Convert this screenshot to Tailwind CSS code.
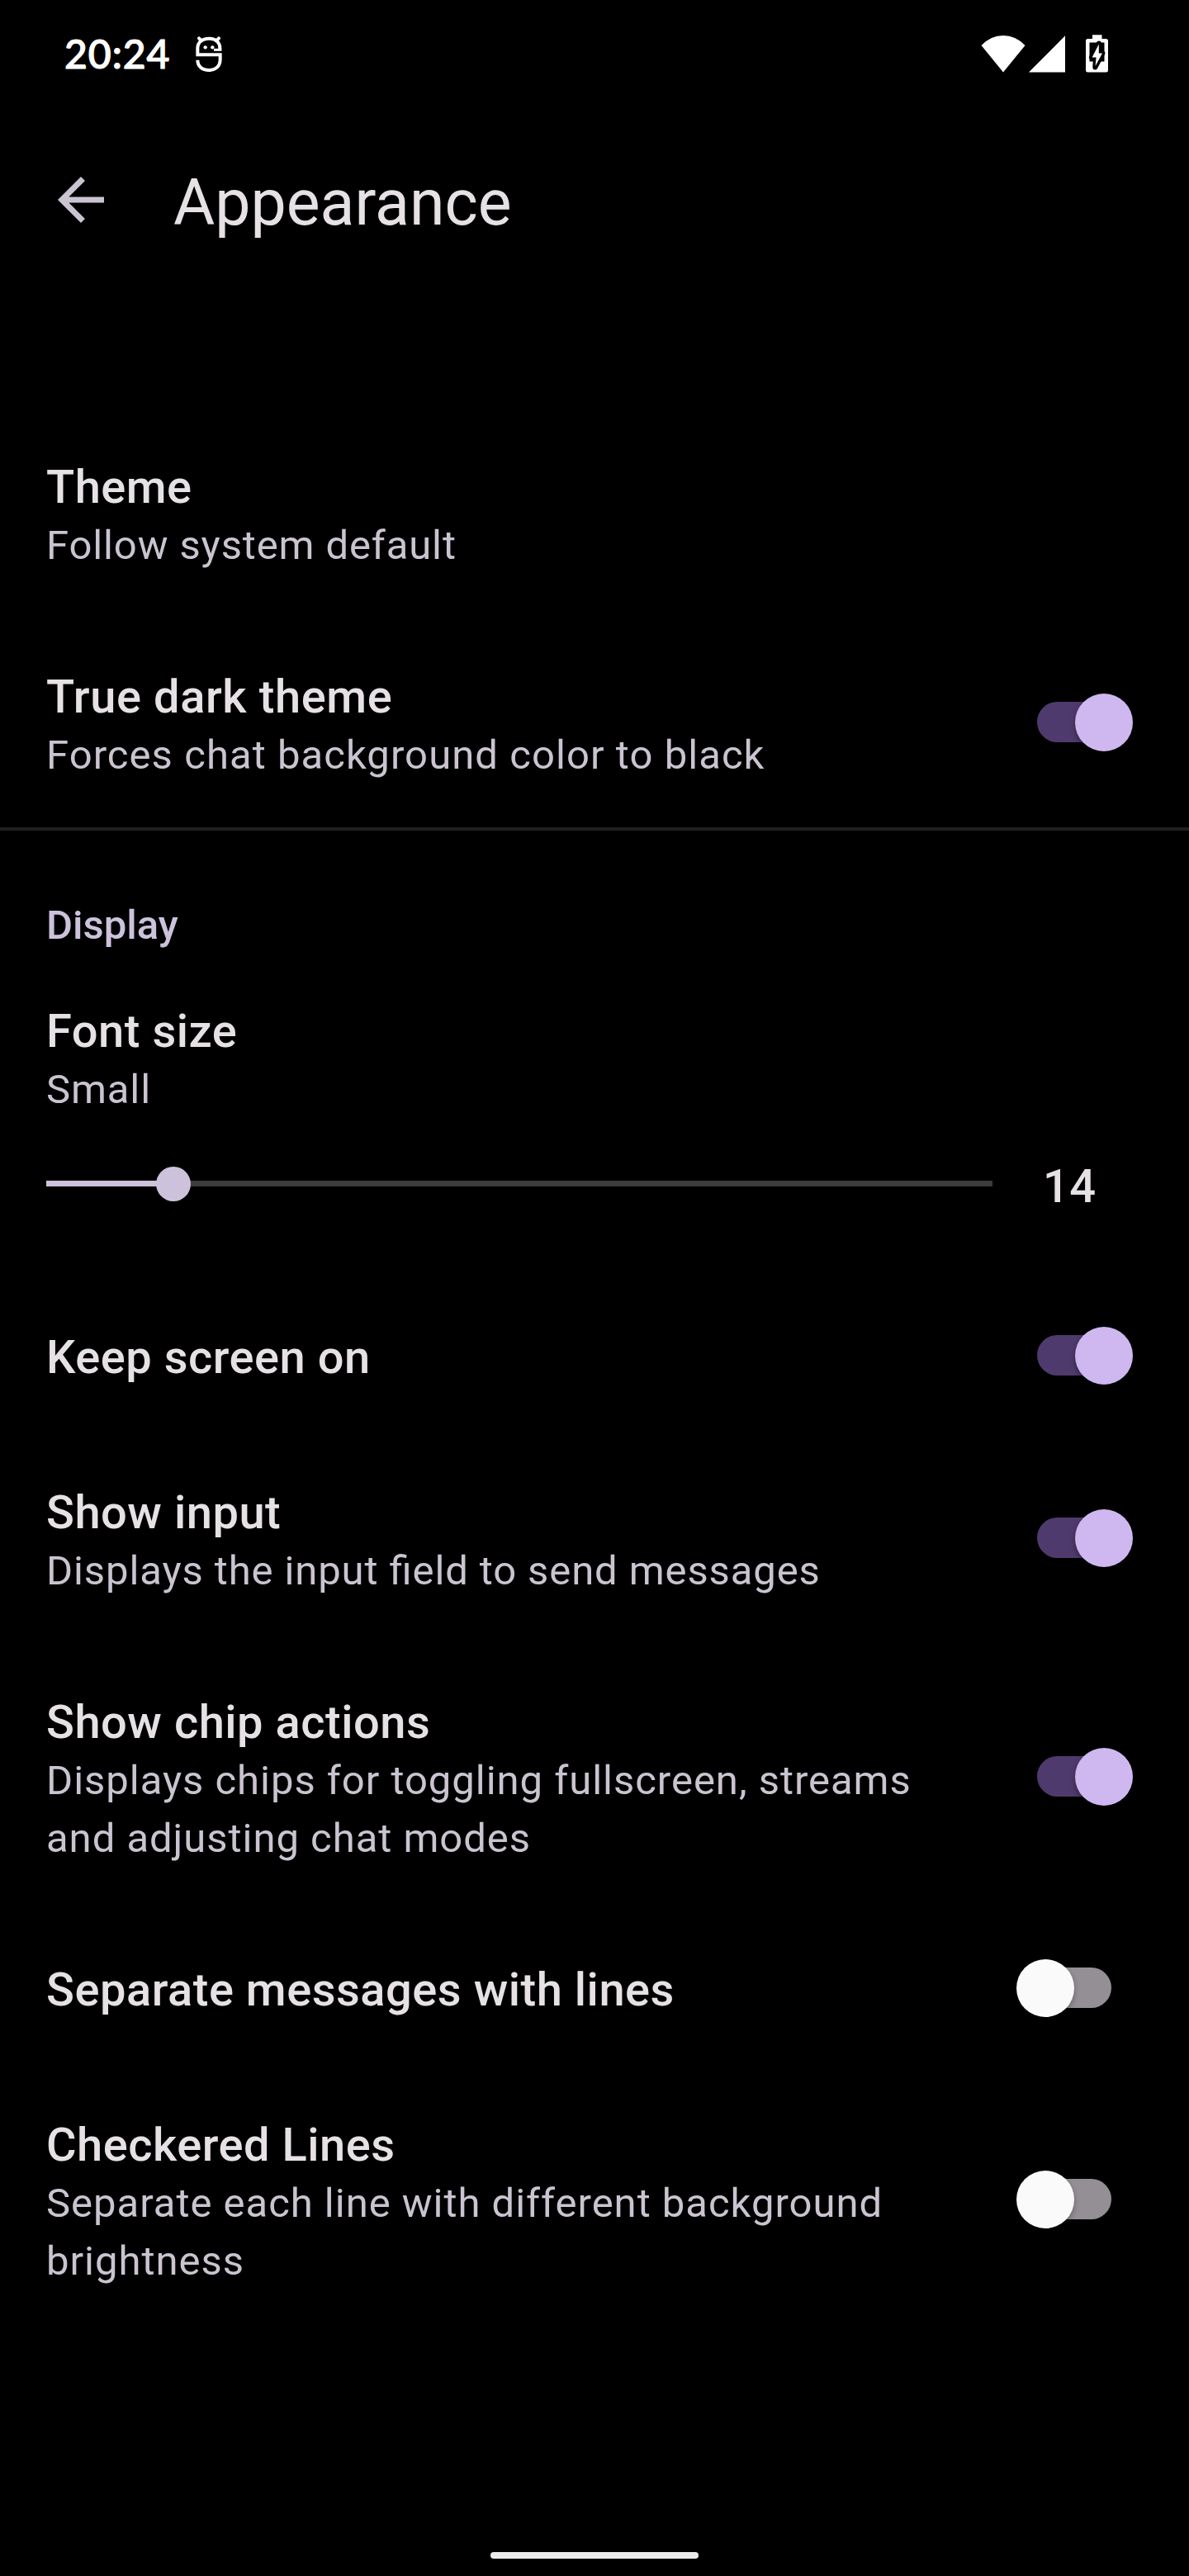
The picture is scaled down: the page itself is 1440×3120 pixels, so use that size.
<!DOCTYPE html>
<html lang="en">
<head>
<meta charset="utf-8">
<meta name="viewport" content="width=device-width, initial-scale=1">
<title>Appearance</title>
<script src="https://cdn.jsdelivr.net/npm/@tailwindcss/browser@4"></script>
</head>
<body class="bg-black">
<div class="w-[1440px] h-[3120px] bg-black flex flex-col overflow-hidden font-[Roboto,sans-serif] text-[#e6e1e5]">

  <!-- Status bar -->
  <header class="h-[140px] shrink-0 flex justify-between pl-[78px] pr-[98px] text-white">
    <div class="flex">
      <span class="mt-[35px] h-[60px] leading-[60px] text-[48px] font-medium tracking-[1px] font-[Lato,sans-serif] [-webkit-text-stroke:1.2px_#fff]">20:24</span>
      <svg class="ml-[29px] mt-[42px] w-[36px] h-[48px]" viewBox="0 0 108 144" fill="none" stroke="#fff" stroke-width="12">
        <path d="M18 13l9 9M90 13l-9 9" stroke-width="12" stroke-linecap="round"/>
        <path d="M94 54V50C94 27 78 14 54 14C30 14 13 27 13 50V73H95V90C95 115 78 129 54 129C30 129 13 115 13 92"/>
        <path d="M72 55H100" stroke-width="9"/>
        <circle cx="41" cy="46" r="6.500" fill="#fff" stroke="none"/>
        <circle cx="67" cy="46" r="6.500" fill="#fff" stroke="none"/>
      </svg>
    </div>
    <div class="flex pt-[42px]">
      <svg class="w-[54px] h-[46px]" viewBox="0 0 54 46" fill="#fff"><path d="M.5 13Q12 1 27 1T53.500 13L27 45.500Z"/></svg>
      <svg class="ml-[4px] w-[44px] h-[46px]" viewBox="0 0 44 46" fill="#fff"><path d="M44 1.300V45.500H0Z"/></svg>
      <svg class="ml-[25px] w-[27px] h-[46px]" viewBox="0 0 27 46">
        <path fill="#fff" d="M8 .3H19.500V5H24.500Q27 5 27 7.500V43Q27 45.500 24.500 45.500H2.500Q0 45.500 0 43V7.500Q0 5 2.500 5H8Z"/>
        <path fill="#000" d="M4.500 9.500H22.500V32.500H4.500Z"/>
        <path fill="#000" stroke="#000" stroke-width="6" stroke-linejoin="round" d="M15.800 10.500L7 27.500H12L11.300 39.500L20.300 22.500H15.800Z"/>
        <path fill="#fff" d="M15.800 11.500L7.600 27.500H12.600L11.600 38L20 22.500H15.800Z"/>
      </svg>
    </div>
  </header>

  <!-- App bar -->
  <div class="h-[354px] shrink-0 flex pl-[56px] pt-[60px]">
    <svg class="w-[84px] h-[84px]" viewBox="0 0 24 24" fill="#cac4d0"><path d="M20 11H7.830l5.590-5.590L12 4l-8 8 8 8 1.410-1.410L7.830 13H20v-2z"/></svg>
    <h1 class="ml-[70px] mt-px h-[90px] leading-[90px] text-[77px]">Appearance</h1>
  </div>

  <main class="flex flex-col [font-feature-settings:'liga'_1]">
    <section class="border-b-4 border-[#1f1f1f]">
      <div class="h-[254px] pt-[62px] pl-[56px]">
        <h2 class="text-[56px] leading-[68px] font-medium tracking-[.525px]">Theme</h2>
        <p class="mt-[2px] text-[49px] leading-[70px] tracking-[.875px] text-[#cac4d0]">Follow system default</p>
      </div>
      <div class="h-[254px] pl-[56px] pr-[68px] flex justify-between">
        <div class="pt-[62px]">
          <h2 class="text-[56px] leading-[68px] font-medium tracking-[.6px]">True dark theme</h2>
          <p class="mt-[2px] text-[49px] leading-[70px] tracking-[1.06px] text-[#cac4d0]">Forces chat background color to black</p>
        </div>
        <div class="relative self-center w-[142px] h-[70px] flex items-center pl-[26px]">
          <div class="mb-px w-[90px] h-[49px] rounded-full bg-[#4f3a6d]"></div>
          <div class="absolute right-0 top-0 size-[70px] rounded-full bg-[#cfb8f0] shadow-[0_3px_6px_rgba(0,0,0,.4)]"></div>
        </div>
      </div>
    </section>

    <section>
      <h3 class="pt-[80px] pl-[56px] text-[49px] leading-[70px] font-medium text-[#ccc2dc]">Display</h3>

      <div class="h-[392px] pt-[59px] pl-[56px]">
        <h2 class="text-[56px] leading-[68px] font-medium tracking-[.525px]">Font size</h2>
        <p class="mt-[2px] text-[49px] leading-[70px] tracking-[.875px] text-[#cac4d0]">Small</p>
        <div class="mt-[48px] flex">
          <div class="relative w-[1146px] h-[61px] flex items-center">
            <div class="w-full h-[7px] bg-[#3d3b3e]"><div class="h-full w-[154px] bg-[#ccc2dc]"></div></div>
            <div class="absolute left-[132.500px] top-[10px] size-[42px] rounded-full bg-[#ccc2dc]"></div>
          </div>
          <span class="ml-[61px] text-[56px] leading-[68px] font-medium tracking-[.525px]">14</span>
        </div>
      </div>

      <div class="h-[188px] pl-[56px] pr-[68px] flex justify-between">
        <h2 class="pt-[62px] text-[56px] leading-[68px] font-medium tracking-[.525px]">Keep screen on</h2>
        <div class="relative self-center w-[142px] h-[70px] flex items-center pl-[26px]">
          <div class="mb-px w-[90px] h-[49px] rounded-full bg-[#4f3a6d]"></div>
          <div class="absolute right-0 top-0 size-[70px] rounded-full bg-[#cfb8f0] shadow-[0_3px_6px_rgba(0,0,0,.4)]"></div>
        </div>
      </div>

      <div class="h-[254px] pl-[56px] pr-[68px] flex justify-between">
        <div class="pt-[62px]">
          <h2 class="text-[56px] leading-[68px] font-medium tracking-[.525px]">Show input</h2>
          <p class="mt-[2px] text-[49px] leading-[70px] tracking-[.89px] text-[#cac4d0]">Displays the input field to send messages</p>
        </div>
        <div class="relative self-center w-[142px] h-[70px] flex items-center pl-[26px]">
          <div class="mb-px w-[90px] h-[49px] rounded-full bg-[#4f3a6d]"></div>
          <div class="absolute right-0 top-0 size-[70px] rounded-full bg-[#cfb8f0] shadow-[0_3px_6px_rgba(0,0,0,.4)]"></div>
        </div>
      </div>

      <div class="h-[324px] pl-[56px] pr-[68px] flex justify-between">
        <div class="pt-[62px]">
          <h2 class="text-[56px] leading-[68px] font-medium tracking-[.525px]">Show chip actions</h2>
          <p class="mt-[2px] text-[49px] leading-[70px] tracking-[.97px] text-[#cac4d0]">Displays chips for toggling fullscreen, streams<br>and adjusting chat modes</p>
        </div>
        <div class="relative self-center w-[142px] h-[70px] flex items-center pl-[26px]">
          <div class="mb-px w-[90px] h-[49px] rounded-full bg-[#4f3a6d]"></div>
          <div class="absolute right-0 top-0 size-[70px] rounded-full bg-[#cfb8f0] shadow-[0_3px_6px_rgba(0,0,0,.4)]"></div>
        </div>
      </div>

      <div class="h-[188px] pl-[56px] pr-[68px] flex justify-between">
        <h2 class="pt-[62px] text-[56px] leading-[68px] font-medium tracking-[.525px]">Separate messages with lines</h2>
        <div class="relative self-center w-[142px] h-[70px] flex items-center pl-[26px]">
          <div class="mb-px w-[90px] h-[49px] rounded-full bg-[#938f94]"></div>
          <div class="absolute left-[.5px] top-0 size-[70px] rounded-full bg-[#fafafa] shadow-[0_3px_6px_rgba(0,0,0,.3)]"></div>
        </div>
      </div>

      <div class="h-[324px] pl-[56px] pr-[68px] flex justify-between">
        <div class="pt-[62px]">
          <h2 class="text-[56px] leading-[68px] font-medium tracking-[.525px]">Checkered Lines</h2>
          <p class="mt-[2px] text-[49px] leading-[70px] tracking-[.98px] text-[#cac4d0]">Separate each line with different background<br>brightness</p>
        </div>
        <div class="relative self-center w-[142px] h-[70px] flex items-center pl-[26px]">
          <div class="mb-px w-[90px] h-[49px] rounded-full bg-[#938f94]"></div>
          <div class="absolute left-[.5px] top-0 size-[70px] rounded-full bg-[#fafafa] shadow-[0_3px_6px_rgba(0,0,0,.3)]"></div>
        </div>
      </div>
    </section>
  </main>

  <!-- Gesture bar -->
  <div class="mt-auto mb-[21px] mx-auto w-[252px] h-[8px] shrink-0 rounded-full bg-[#ebebeb]"></div>
</div>
</body>
</html>
